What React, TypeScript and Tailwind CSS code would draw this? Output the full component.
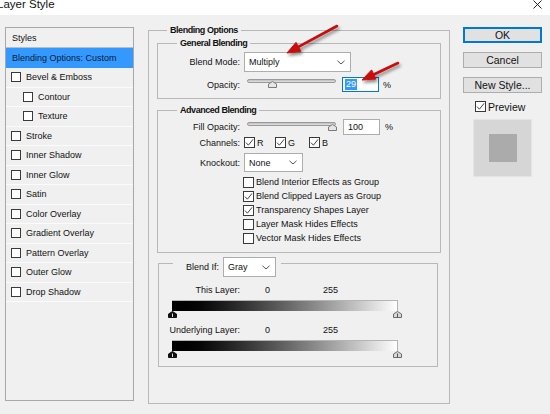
import React from "react";

function PanelBox() {
  return <span className="block w-[10px] h-[10px] border border-[#3a3a3a] bg-white shrink-0" />;
}

function Check({ checked }: { checked?: boolean }) {
  return (
    <span className="flex w-[11px] h-[11px] border border-[#3a3a3a] bg-white shrink-0 items-center justify-center">
      {checked ? (
        <svg width="9" height="9" viewBox="0 0 9 9">
          <path d="M1 4.6 L3.4 7.2 L8 1.4" fill="none" stroke="#444" strokeWidth="1" />
        </svg>
      ) : null}
    </span>
  );
}

function Chevron() {
  return (
    <svg width="8" height="5" viewBox="0 0 8 5">
      <path d="M0.5 0.8 L4 4 L7.5 0.8" fill="none" stroke="#555" strokeWidth="1" />
    </svg>
  );
}

function SliderThumb() {
  return (
    <svg width="9" height="7" viewBox="0 0 9 7">
      <path d="M0.5 6.5 L0.5 3 L4.5 0.5 L8.5 3 L8.5 6.5 Z" fill="#e6e6e6" stroke="#7a7a7a" strokeWidth="1" />
    </svg>
  );
}

function BlackThumb() {
  return (
    <svg width="9" height="7" viewBox="0 0 9 7">
      <path d="M0.5 6.5 L0.5 3 L4.5 0.5 L8.5 3 L8.5 6.5 Z" fill="#111" stroke="#111" strokeWidth="1" />
      <path d="M4.5 2.5 L4.5 6" stroke="#ddd" strokeWidth="1" />
    </svg>
  );
}

function WhiteThumb() {
  return (
    <svg width="9" height="7" viewBox="0 0 9 7">
      <path d="M0.5 6.5 L0.5 3 L4.5 0.5 L8.5 3 L8.5 6.5 Z" fill="#d8d8d8" stroke="#6a6a6a" strokeWidth="1" />
      <path d="M4.5 2.5 L4.5 6" stroke="#555" strokeWidth="1" />
    </svg>
  );
}

const items: { label: string; indent?: boolean }[] = [
  { label: "Bevel & Emboss" },
  { label: "Contour", indent: true },
  { label: "Texture", indent: true },
  { label: "Stroke" },
  { label: "Inner Shadow" },
  { label: "Inner Glow" },
  { label: "Satin" },
  { label: "Color Overlay" },
  { label: "Gradient Overlay" },
  { label: "Pattern Overlay" },
  { label: "Outer Glow" },
  { label: "Drop Shadow" },
];

const options: { label: string; checked: boolean }[] = [
  { label: "Blend Interior Effects as Group", checked: false },
  { label: "Blend Clipped Layers as Group", checked: true },
  { label: "Transparency Shapes Layer", checked: true },
  { label: "Layer Mask Hides Effects", checked: false },
  { label: "Vector Mask Hides Effects", checked: false },
];

export default function App() {
  return (
    <div className="relative w-[550px] h-[414px] overflow-hidden bg-[#f0f0f0] text-[#111] font-['Liberation_Sans',Arial,sans-serif] text-[9px] leading-[12px]">
      {/* title bar */}
      <div className="h-[15px] bg-white flex items-start justify-between">
        <span className="ml-[-3px] mt-[-3px] text-[11.5px] leading-[14px] text-[#111]">Layer Style</span>
        <svg width="9" height="9" viewBox="0 0 9 9" className="mr-[8px] mt-[0px]">
          <path d="M0.5 0.5 L8.5 8.5 M8.5 0.5 L0.5 8.5" stroke="#222" strokeWidth="1" />
        </svg>
      </div>

      <div className="flex items-start pl-[5px] pt-[12px]">
        {/* left styles panel */}
        <div className="w-[129px] h-[374px] border border-[#a8a8a8] flex flex-col shrink-0">
          <div className="h-[20px] border-b border-[#bdbdbd] pl-[6px] flex items-center">Styles</div>
          <div className="h-[20px] bg-[#3399ff] pl-[6px] flex items-center text-[#0b1b36]">Blending Options: Custom</div>
          {items.map((it) => (
            <div
              key={it.label}
              className={
                it.indent
                  ? "h-[19.5px] border-b border-[#fbfbfb] flex items-center gap-[5px] pl-[17px]"
                  : "h-[19.5px] border-b border-[#fbfbfb] flex items-center gap-[5px] pl-[5px]"
              }
            >
              <PanelBox />
              <span>{it.label}</span>
            </div>
          ))}
        </div>

        {/* main blending options */}
        <fieldset className="ml-[14px] mt-[-3px] w-[302px] h-[380px] border border-[#b8b8b8] px-[8px] shrink-0">
          <legend className="ml-[10px] px-[3px] font-bold tracking-[-0.45px] leading-[12px]">Blending Options</legend>

          {/* General Blending */}
          <fieldset className="mt-[1px] h-[62px] border border-[#b8b8b8]">
            <legend className="ml-[19px] px-[3px] font-bold tracking-[-0.45px] leading-[12px]">General Blending</legend>
            <div className="mt-[3px] flex items-center h-[20px]">
              <div className="w-[82px] text-right">Blend Mode:</div>
              <div className="ml-[4px] w-[107px] h-[20px] bg-white border border-[#adadad] flex items-center justify-between pl-[4px] pr-[5px]">
                <span>Multiply</span>
                <Chevron />
              </div>
            </div>
            <div className="mt-[5px] flex items-center h-[15px]">
              <div className="w-[82px] text-right">Opacity:</div>
              <div className="relative ml-[7px] w-[89px] h-[15px]">
                <div className="absolute left-0 right-0 top-[2px] h-[4px] rounded-[2px] border border-[#9a9a9a] bg-gradient-to-b from-[#bcbcbc] to-[#e4e4e4]" />
                <div className="absolute left-[21px] top-[4px] flex">
                  <SliderThumb />
                </div>
              </div>
              <div className="ml-[6px] w-[37px] h-[15px] bg-white border border-[#0078d7] flex items-center pl-[2px]">
                <span className="bg-[#3399ff] text-white px-[1px] leading-[11px]">29</span>
              </div>
              <span className="ml-[4px]">%</span>
            </div>
          </fieldset>

          {/* Advanced Blending */}
          <fieldset className="mt-[5px] h-[149px] border border-[#b8b8b8]">
            <legend className="ml-[19px] px-[3px] font-bold tracking-[-0.45px] leading-[12px]">Advanced Blending</legend>
            <div className="mt-[3px] flex items-center h-[16px]">
              <div className="w-[82px] text-right">Fill Opacity:</div>
              <div className="relative ml-[7px] w-[89px] h-[16px]">
                <div className="absolute left-0 right-0 top-[3px] h-[4px] rounded-[2px] border border-[#9a9a9a] bg-gradient-to-b from-[#bcbcbc] to-[#e4e4e4]" />
                <div className="absolute left-[81px] top-[5px] flex">
                  <SliderThumb />
                </div>
              </div>
              <div className="ml-[7px] w-[37px] h-[16px] bg-white border border-[#adadad] flex items-center pl-[4px]">100</div>
              <span className="ml-[5px]">%</span>
            </div>
            <div className="mt-[2px] flex items-center h-[11px]">
              <div className="w-[82px] text-right">Channels:</div>
              <div className="ml-[4px] w-[31px] flex items-center gap-[2px]">
                <Check checked />
                <span>R</span>
              </div>
              <div className="w-[34px] flex items-center gap-[2px]">
                <Check checked />
                <span>G</span>
              </div>
              <div className="flex items-center gap-[2px]">
                <Check checked />
                <span>B</span>
              </div>
            </div>
            <div className="mt-[5px] flex items-center h-[19px]">
              <div className="w-[82px] text-right">Knockout:</div>
              <div className="ml-[4px] w-[59px] h-[19px] bg-white border border-[#adadad] flex items-center justify-between pl-[4px] pr-[5px]">
                <span>None</span>
                <Chevron />
              </div>
            </div>
            <div className="mt-[3px] flex flex-col">
              {options.map((o) => (
                <div key={o.label} className="h-[14px] flex items-center pl-[85px] gap-[2px]">
                  <Check checked={o.checked} />
                  <span>{o.label}</span>
                </div>
              ))}
            </div>
          </fieldset>

          {/* Blend If */}
          <fieldset className="ml-[1px] mt-[4px] w-[280px] h-[110px] border border-[#b8b8b8]">
            <legend className="ml-[14px] pr-[5px]">
              <div className="flex items-center h-[20px] mb-[-8px] pl-[13px]">
                <span>Blend If:</span>
                <div className="ml-[4px] w-[53px] h-[20px] bg-white border border-[#adadad] flex items-center justify-between pl-[4px] pr-[5px]">
                  <span>Gray</span>
                  <Chevron />
                </div>
              </div>
            </legend>
            <div className="mt-[15px] flex h-[12px]">
              <div className="w-[81px] text-right">This Layer:</div>
              <span className="ml-[25px]">0</span>
              <span className="ml-[53px]">255</span>
            </div>
            <div className="mt-[4px] ml-[13px] w-[226px] h-[11px] border-t border-r border-[#b4b4b4] bg-gradient-to-r from-black to-white" />
            <div className="ml-[9px] w-[234px] h-[7px] flex justify-between">
              <BlackThumb />
              <WhiteThumb />
            </div>
            <div className="mt-[6px] flex h-[12px]">
              <div className="w-[81px] text-right">Underlying Layer:</div>
              <span className="ml-[25px]">0</span>
              <span className="ml-[53px]">255</span>
            </div>
            <div className="mt-[4px] ml-[13px] w-[226px] h-[11px] border-t border-r border-[#b4b4b4] bg-gradient-to-r from-black to-white" />
            <div className="ml-[9px] w-[234px] h-[7px] flex justify-between">
              <BlackThumb />
              <WhiteThumb />
            </div>
          </fieldset>
        </fieldset>

        {/* right column */}
        <div className="ml-[13px] flex flex-col shrink-0">
          <div className="w-[79px] h-[16px] bg-[#e1e1e1] border border-[#0078d7] shadow-[inset_0_0_0_1px_#0078d7] flex items-center justify-center text-[10.5px]">OK</div>
          <div className="mt-[9px] w-[79px] h-[16px] bg-[#e1e1e1] border border-[#adadad] flex items-center justify-center text-[10.5px]">Cancel</div>
          <div className="mt-[9px] w-[79px] h-[16px] bg-[#e1e1e1] border border-[#adadad] flex items-center justify-center text-[10.5px]">New Style...</div>
          <div className="mt-[8px] ml-[12px] h-[11px] flex items-center gap-[2px] text-[10.5px]">
            <Check checked />
            <span>Preview</span>
          </div>
          <div className="mt-[7px] ml-[10px] w-[59px] h-[58px] bg-[#d6d6d6] border border-[#e4e4e4] flex items-center justify-center">
            <div className="w-[28px] h-[28px] bg-[#ababab]" />
          </div>
        </div>
      </div>

      {/* red annotation arrows */}
      <svg className="absolute inset-0 pointer-events-none" width="550" height="414" viewBox="0 0 550 414">
        <defs>
          <filter id="sh" x="-20%" y="-20%" width="140%" height="140%">
            <feDropShadow dx="1.5" dy="2.5" stdDeviation="1.5" floodColor="#000" floodOpacity="0.45" />
          </filter>
        </defs>
        <g filter="url(#sh)" fill="#c80a0a" stroke="#c80a0a">
          <path d="M337 26 L298.4 46.8" strokeWidth="2.6" strokeLinecap="round" />
          <path d="M287 53 L300.8 51.2 L296 42.4 Z" strokeWidth="1" strokeLinejoin="round" />
          <path d="M398 63 L373.8 74.5" strokeWidth="2.6" strokeLinecap="round" />
          <path d="M362 80 L375.9 79 L371.6 69.9 Z" strokeWidth="1" strokeLinejoin="round" />
        </g>
      </svg>
    </div>
  );
}
